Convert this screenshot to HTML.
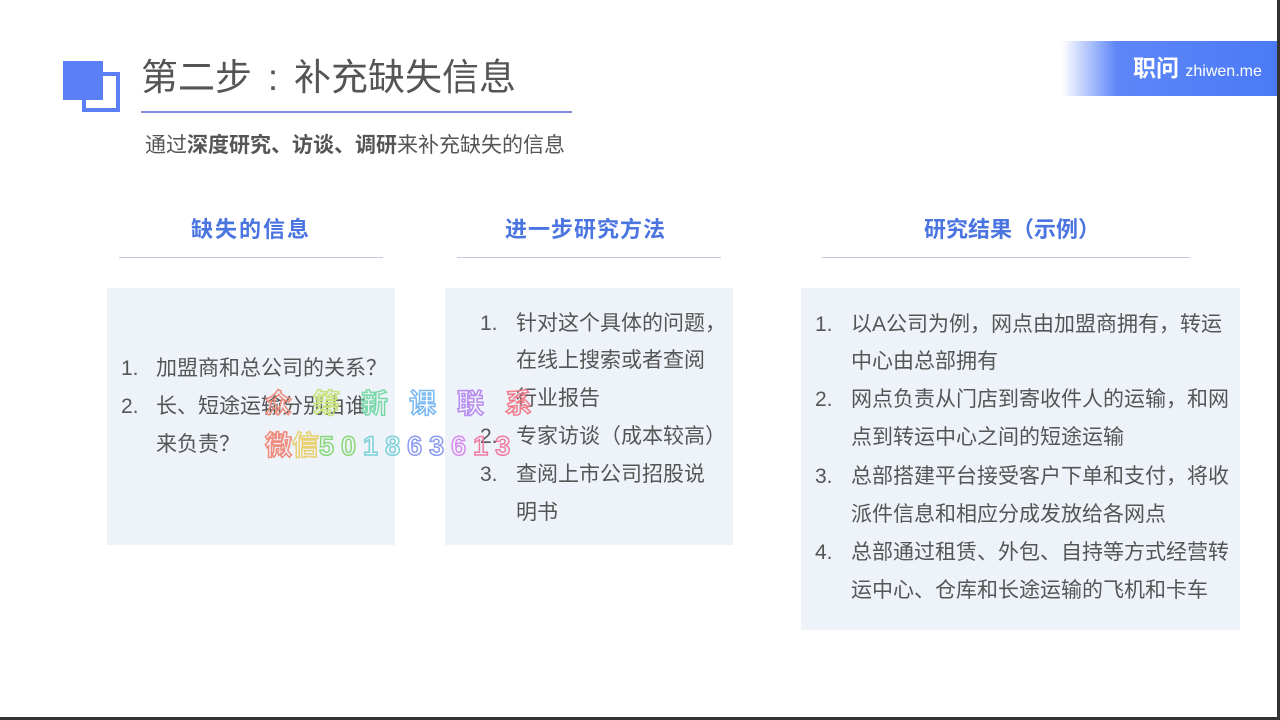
<!DOCTYPE html>
<html><head><meta charset="utf-8"><style>
body{margin:0;width:1280px;height:720px;background:#fff;position:relative;overflow:hidden;font-family:"Liberation Sans","Noto Sans CJK SC",sans-serif;}
.a{position:absolute;white-space:nowrap;}
.l{position:absolute;white-space:nowrap;font-size:21px;color:#555;line-height:38px;}
.h{position:absolute;font-size:22px;font-weight:bold;color:#4a74e0;white-space:nowrap;}
.box{position:absolute;background:#eef3fa;}
.hr{position:absolute;height:1px;background:#c3c8e6;}
.wm{position:absolute;font-size:27px;font-weight:bold;color:transparent;-webkit-text-stroke:1.5px;white-space:nowrap;}
</style></head><body>
<div class="a" style="left:82px;top:72px;width:30px;height:32px;border:4px solid #5b7ff5;"></div>
<div class="a" style="left:63px;top:61px;width:40px;height:39px;background:#5b7ff5;"></div>
<div class="a" style="left:141px;top:55px;font-size:37px;color:#555;line-height:46px;">第二步<span style="display:inline-block;width:42px;text-align:center;">:</span>补充缺失信息</div>
<div class="a" style="left:141px;top:111px;width:431px;height:2px;background:#7d8cdc;"></div>
<div class="a" style="left:145px;top:133px;font-size:21px;color:#555;line-height:26px;">通过<b>深度研究、访谈、调研</b>来补充缺失的信息</div>
<div class="a" style="left:1062px;top:41px;width:218px;height:55px;background:linear-gradient(90deg,#fff 0%,#5e86f8 25%,#4a7af6 100%);"></div>
<div class="a" style="left:1133px;top:53px;font-size:23px;color:#fff;font-weight:bold;line-height:30px;">职问 <span style="font-size:16px;font-weight:normal;">zhiwen.me</span></div>
<div class="a" style="left:1277px;top:0;width:3px;height:720px;background:#333;"></div>
<div class="a" style="left:0;top:717px;width:1280px;height:3px;background:#333;"></div>

<div class="h" style="left:191px;top:212px;letter-spacing:2px;">缺失的信息</div>
<div class="h" style="left:505px;top:212px;letter-spacing:1px;">进一步研究方法</div>
<div class="h" style="left:924px;top:212px;">研究结果（示例）</div>
<div class="hr" style="left:119px;top:257px;width:264px;"></div>
<div class="hr" style="left:457px;top:257px;width:264px;"></div>
<div class="hr" style="left:822px;top:257px;width:368px;"></div>

<div class="box" style="left:107px;top:288px;width:288px;height:257px;"></div>
<div class="box" style="left:445px;top:288px;width:288px;height:257px;"></div>
<div class="box" style="left:801px;top:288px;width:439px;height:342px;"></div>

<div class="l" style="left:121px;top:350px;">1.</div><div class="l" style="left:156px;top:350px;">加盟商和总公司的关系？</div>
<div class="l" style="left:121px;top:388px;">2.</div><div class="l" style="left:156px;top:388px;">长、短途运输分别由谁</div>
<div class="l" style="left:156px;top:426px;">来负责？</div>

<div class="l" style="left:480px;top:305px;">1.</div><div class="l" style="left:516px;top:305px;">针对这个具体的问题，</div>
<div class="l" style="left:516px;top:342px;">在线上搜索或者查阅</div>
<div class="l" style="left:516px;top:380px;">行业报告</div>
<div class="l" style="left:480px;top:418px;">2.</div><div class="l" style="left:516px;top:418px;">专家访谈（成本较高）</div>
<div class="l" style="left:480px;top:456px;">3.</div><div class="l" style="left:516px;top:456px;">查阅上市公司招股说</div>
<div class="l" style="left:516px;top:494px;">明书</div>

<div class="l" style="left:815px;top:306px;">1.</div><div class="l" style="left:851px;top:306px;">以A公司为例，网点由加盟商拥有，转运</div>
<div class="l" style="left:851px;top:343px;">中心由总部拥有</div>
<div class="l" style="left:815px;top:381px;">2.</div><div class="l" style="left:851px;top:381px;">网点负责从门店到寄收件人的运输，和网</div>
<div class="l" style="left:851px;top:419px;">点到转运中心之间的短途运输</div>
<div class="l" style="left:815px;top:458px;">3.</div><div class="l" style="left:851px;top:458px;">总部搭建平台接受客户下单和支付，将收</div>
<div class="l" style="left:851px;top:496px;">派件信息和相应分成发放给各网点</div>
<div class="l" style="left:815px;top:534px;">4.</div><div class="l" style="left:851px;top:534px;">总部通过租赁、外包、自持等方式经营转</div>
<div class="l" style="left:851px;top:572px;">运中心、仓库和长途运输的飞机和卡车</div>

<div class="wm" style="left:265px;top:382px;letter-spacing:21px;"><span style="-webkit-text-stroke-color:#f08a7a">众</span><span style="-webkit-text-stroke-color:#c8e27a">筹</span><span style="-webkit-text-stroke-color:#7ad8a8">新</span><span style="-webkit-text-stroke-color:#7ab8f0">课</span><span style="-webkit-text-stroke-color:#b88af0">联</span><span style="-webkit-text-stroke-color:#f07a8a">系</span></div>
<div class="wm" style="left:265px;top:424px;"><span style="-webkit-text-stroke-color:#f08a7a">微</span><span style="-webkit-text-stroke-color:#e8d070">信</span><span style="letter-spacing:7px;"><span style="-webkit-text-stroke-color:#8ad87a">50</span><span style="-webkit-text-stroke-color:#7ad0d8">18</span><span style="-webkit-text-stroke-color:#8a9af0">63</span><span style="-webkit-text-stroke-color:#d88af0">6</span><span style="-webkit-text-stroke-color:#f07aa0">13</span></span></div>
</body></html>
